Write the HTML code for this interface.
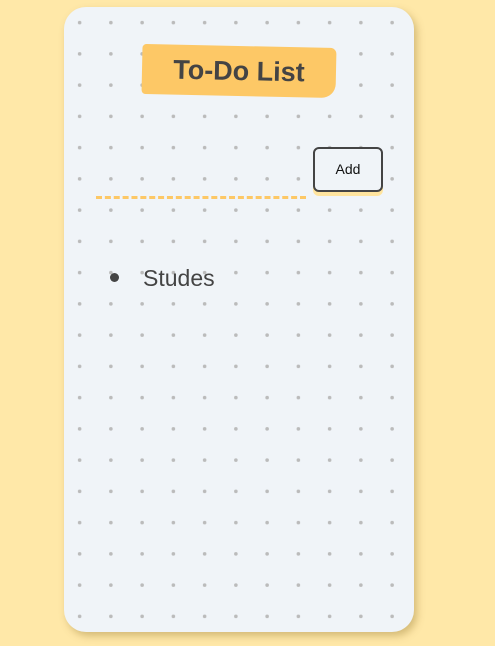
<!DOCTYPE html>
<html><head><style>
html,body{margin:0;padding:0;width:495px;height:646px;background:#ffe8a8;overflow:hidden;font-family:"Liberation Sans",sans-serif;}
.card{position:absolute;left:64px;top:7px;width:350px;height:625px;border-radius:22px;background-color:#f0f4f8;
background-image:radial-gradient(circle,#bbbbbb 1.7px,transparent 2px);background-size:31.25px 31.25px;background-position:0px 0px;
box-shadow:3px 4px 8px rgba(160,130,60,.45);}
.title{position:absolute;left:142px;top:46px;width:194px;height:50px;background:#fdc866;border-radius:4px 6px 14px 4px;transform:rotate(1.2deg);
color:#444;font-size:27px;font-weight:bold;text-align:center;line-height:50px;}
.line{position:absolute;left:96px;top:196px;width:210px;border-top:3px dashed #fdc866;}
.btn{position:absolute;left:313px;top:147px;width:66px;height:41px;border:2px solid #444;border-radius:6px;background:#f0f4f8;
box-shadow:0 4px 0 #ffe49e;font-size:14px;line-height:41px;text-align:center;color:#111;}
.dot{position:absolute;left:110px;top:273px;width:9px;height:9px;border-radius:50%;background:#444;}
.item{position:absolute;left:143px;top:265px;font-size:23px;color:#444;}
</style></head><body>
<div class="card"></div>
<div class="title">To-Do List</div>
<div class="line"></div>
<div class="btn">Add</div>
<div class="dot"></div>
<div class="item">Studes</div>
</body></html>
